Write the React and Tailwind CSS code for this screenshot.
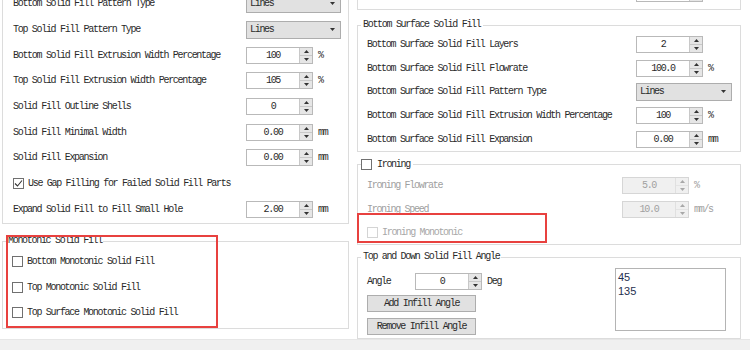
import React from 'react';

const MONO = "font-['Liberation_Mono',monospace] text-[10px] tracking-[-1.3px]";

const Up = ({ c }) => (
  <svg width="5" height="3" viewBox="0 0 5 3"><path d="M0 3L2.5 0L5 3Z" fill={c} /></svg>
);
const Down = ({ c }) => (
  <svg width="5" height="3" viewBox="0 0 5 3"><path d="M0 0L2.5 3L5 0Z" fill={c} /></svg>
);

function Spin({ value, disabled }) {
  const c = disabled ? '#a8a8a8' : '#333';
  return (
    <div className={`flex h-[17px] w-[67px] border ${disabled ? 'border-[#d6d6d6] bg-[#f0f0f0] text-[#a0a0a0]' : 'border-[#b9b9b9] bg-white text-[#2a2a2a]'}`}>
      <div className="flex flex-1 items-center justify-center">{value}</div>
      <div className={`flex w-[13px] flex-col border-l ${disabled ? 'border-[#e0e0e0]' : 'border-[#c8c8c8]'}`}>
        <div className={`flex flex-1 items-center justify-center ${disabled ? 'bg-[#f0f0f0]' : 'bg-[#e6e6e6]'}`}><Up c={c} /></div>
        <div className={`h-px ${disabled ? 'bg-[#e4e4e4]' : 'bg-[#c8c8c8]'}`} />
        <div className={`flex flex-1 items-center justify-center ${disabled ? 'bg-[#f0f0f0]' : 'bg-[#e6e6e6]'}`}><Down c={c} /></div>
      </div>
    </div>
  );
}

function Combo({ w }) {
  return (
    <div className={`flex h-[18px] ${w} items-center justify-between border border-[#adadad] bg-[#e1e1e1] pl-[3px] pr-[5px] text-[#2a2a2a]`}>
      <span>Lines</span>
      <Down c="#333" />
    </div>
  );
}

function Check({ checked, disabled }) {
  return (
    <span className={`inline-flex h-[11px] w-[11px] shrink-0 items-center justify-center border bg-white ${disabled ? 'border-[#d4d4d4]' : 'border-[#707070]'}`}>
      {checked && (
        <svg width="9" height="9" viewBox="0 0 9 9"><path d="M1 4.5L3.5 7L8 1.5" fill="none" stroke="#333" strokeWidth="1.1" /></svg>
      )}
    </span>
  );
}

function Row({ label, labelW, h, unit, disabled, children }) {
  return (
    <div className={`flex items-center ${h}`}>
      <div className={`${labelW} ${disabled ? 'text-[#a0a0a0]' : 'text-[#2a2a2a]'}`}>{label}</div>
      {children}
      {unit && <span className={`ml-[5px] ${disabled ? 'text-[#a0a0a0]' : 'text-[#2a2a2a]'}`}>{unit}</span>}
    </div>
  );
}

function CheckRow({ label, checked, disabled, h }) {
  return (
    <div className={`flex items-center gap-[4px] ${h} ${disabled ? 'text-[#a8a8a8]' : 'text-[#2a2a2a]'}`}>
      <Check checked={checked} disabled={disabled} />
      <span>{label}</span>
    </div>
  );
}

export default function App() {
  const L = 'w-[233px]';
  const LH = 'h-[25.7px]';
  const R = 'w-[269px]';
  const RH = 'h-[23.6px]';
  return (
    <div className={`relative flex h-[350px] w-[750px] flex-col overflow-hidden bg-white ${MONO}`}>
      <div className="flex h-[339px]">
        {/* left column */}
        <div className="ml-[2px] flex w-[347px] flex-col">
          <div className="-mt-[12px] border border-[#dcdcdc] pb-[1px] pl-[10px] pt-[2px]">
            <Row label="Bottom Solid Fill Pattern Type" labelW={L} h={LH}><Combo w="w-[95px]" /></Row>
            <Row label="Top Solid Fill Pattern Type" labelW={L} h={LH}><Combo w="w-[95px]" /></Row>
            <Row label="Bottom Solid Fill Extrusion Width Percentage" labelW={L} h={LH} unit="%"><Spin value="100" /></Row>
            <Row label="Top Solid Fill Extrusion Width Percentage" labelW={L} h={LH} unit="%"><Spin value="105" /></Row>
            <Row label="Solid Fill Outline Shells" labelW={L} h={LH}><Spin value="0" /></Row>
            <Row label="Solid Fill Minimal Width" labelW={L} h={LH} unit="mm"><Spin value="0.00" /></Row>
            <Row label="Solid Fill Expansion" labelW={L} h={LH} unit="mm"><Spin value="0.00" /></Row>
            <CheckRow label="Use Gap Filling for Failed Solid Fill Parts" checked h={LH} />
            <Row label="Expand Solid Fill to Fill Small Hole" labelW={L} h={LH} unit="mm"><Spin value="2.00" /></Row>
          </div>

          <fieldset className="mt-[11px] border border-[#dcdcdc] pb-[2px] pl-[9px] pt-[2px]">
            <legend className="-ml-[5px] px-px leading-[12px] text-[#2a2a2a]">Monotonic Solid Fill</legend>
            <CheckRow label="Bottom Monotonic Solid Fill" h="h-[25.5px]" />
            <CheckRow label="Top Monotonic Solid Fill" h="h-[25.5px]" />
            <CheckRow label="Top Surface Monotonic Solid Fill" h="h-[25.5px]" />
          </fieldset>
        </div>

        {/* right column */}
        <div className="ml-[8px] flex w-[384px] flex-col">
          <div className="-mt-[20px] flex h-[30px] items-end border border-[#dcdcdc] pb-[7px] pl-[278px]">
            <Spin value="" />
          </div>

          <fieldset className="mt-[9px] border border-[#dcdcdc] pl-[9px] pt-[2px]">
            <legend className="-ml-[6px] px-[2px] leading-[12px] text-[#2a2a2a]">Bottom Surface Solid Fill</legend>
            <Row label="Bottom Surface Solid Fill Layers" labelW={R} h={RH}><Spin value="2" /></Row>
            <Row label="Bottom Surface Solid Fill Flowrate" labelW={R} h={RH} unit="%"><Spin value="100.0" /></Row>
            <Row label="Bottom Surface Solid Fill Pattern Type" labelW={R} h={RH}><Combo w="w-[96px]" /></Row>
            <Row label="Bottom Surface Solid Fill Extrusion Width Percentage" labelW={R} h={RH} unit="%"><Spin value="100" /></Row>
            <Row label="Bottom Surface Solid Fill Expansion" labelW={R} h={RH} unit="mm"><Spin value="0.00" /></Row>
          </fieldset>

          <fieldset className="mt-[7px] border border-[#dcdcdc] pl-[9px] pt-[3px]">
            <legend className="-ml-[6px] flex items-center gap-[5px] pr-[3px] leading-[12px] text-[#2a2a2a]">
              <Check />
              <span>Ironing</span>
            </legend>
            <Row label="Ironing Flowrate" labelW="w-[255px]" h="h-[23.5px]" unit="%" disabled><Spin value="5.0" disabled /></Row>
            <Row label="Ironing Speed" labelW="w-[255px]" h="h-[23.5px]" unit="mm/s" disabled><Spin value="10.0" disabled /></Row>
            <CheckRow label="Ironing Monotonic" disabled h="h-[23.5px]" />
          </fieldset>

          <fieldset className="mt-[6px] flex flex-1 border border-[#dcdcdc] pl-[9px]">
            <legend className="-ml-[6px] px-[2px] leading-[12px] text-[#2a2a2a]">Top and Down Solid Fill Angle</legend>
            <div className="flex w-full">
              <div className="flex flex-col pt-[9px]">
                <div className="flex h-[18px] items-center text-[#2a2a2a]">
                  <span className="w-[48px]">Angle</span>
                  <Spin value="0" />
                  <span className="ml-[5px]">Deg</span>
                </div>
                <button className="mt-[5px] flex h-[17px] w-[109px] items-center justify-center border border-[#adadad] bg-[#e1e1e1] text-[#2a2a2a]">Add Infill Angle</button>
                <button className="mt-[6px] flex h-[17px] w-[109px] items-center justify-center border border-[#adadad] bg-[#e1e1e1] text-[#2a2a2a]">Remove Infill Angle</button>
              </div>
              <div className="ml-auto mr-[14px] mt-[5px] flex h-[63px] w-[111px] flex-col border border-[#b4b4b4] bg-white pl-[2px] pt-px font-['Liberation_Sans',sans-serif] text-[11px] leading-[14px] tracking-normal text-[#1f2f4f]">
                <span>45</span>
                <span>135</span>
              </div>
            </div>
          </fieldset>
        </div>
      </div>
      <div className="flex-1 border-t border-[#e6e6e6] bg-[#f0f0f0]" />

      {/* annotation boxes */}
      <div className="absolute left-[6px] top-[235px] h-[93px] w-[212px] border-2 border-[#e8413f]" />
      <div className="absolute left-[357px] top-[213px] h-[30px] w-[190px] border-2 border-[#e8413f]" />
    </div>
  );
}
